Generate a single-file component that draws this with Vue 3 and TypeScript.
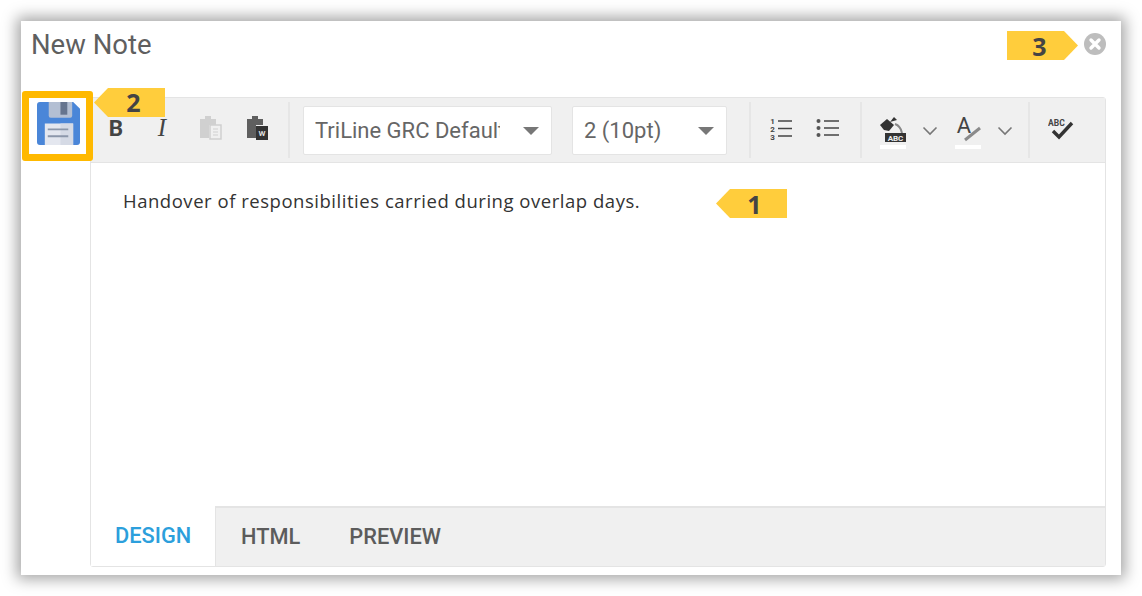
<script setup lang="ts">
import { ref } from 'vue'

const tabs = ['Design', 'HTML', 'Preview']
const activeTab = ref('Design')
</script>

<template>
  <div class="page">
    <div class="panel">
      <header class="head">
        <h1 class="title">New Note</h1>
        <svg class="close" width="24" height="24" viewBox="0 0 24 24">
          <circle cx="12" cy="12" r="11" fill="#bdbdbd" />
          <path d="M8 8l8 8M16 8l-8 8" stroke="#fff" stroke-width="3.4" stroke-linecap="round" />
        </svg>
      </header>

      <div class="body">
        <div class="rail">
          <svg width="43" height="43" viewBox="0 0 44 44">
            <path d="M3 0h34l7 7v34a3 3 0 0 1-3 3H3a3 3 0 0 1-3-3V3a3 3 0 0 1 3-3z" fill="#4a86d8" />
            <path d="M12 0h24v14a2 2 0 0 1-2 2H14a2 2 0 0 1-2-2z" fill="#b3bfd3" />
            <rect x="24" y="0" width="7" height="13" fill="#66758f" />
            <rect x="8" y="22" width="29" height="22" fill="#e4e7ef" />
            <rect x="24" y="22" width="13" height="22" fill="#d5dae5" />
            <path d="M11 28h21M11 35h21" stroke="#8c97aa" stroke-width="2" />
          </svg>
        </div>

        <div class="editor">
          <div class="toolbar">
            <div class="group first">
              <span class="btn bold">B</span>
              <span class="btn italic">I</span>
              <span class="btn paste">
                <svg width="24" height="24" viewBox="0 0 24 24">
                  <path d="M1 3h5V0h6v3h5v6h-7v13H1z" fill="#d0d0d0" />
                  <path d="M11 9h11v14H11z" fill="#f0f0f0" stroke="#cfcfcf" stroke-width="1.5" />
                  <path d="M14 13h5M14 16h5M14 19h5" stroke="#cfcfcf" stroke-width="1.2" />
                </svg>
              </span>
              <span class="btn paste-word">
                <svg width="24" height="24" viewBox="0 0 24 24">
                  <path d="M1 3h5V0h6v3h5v6h-7v13H1z" fill="#5f5f5f" />
                  <path d="M10 10h12v14H10z" fill="#333" />
                  <text x="16" y="20" class="mini" text-anchor="middle">W</text>
                </svg>
              </span>
            </div>

            <div class="group selects">
              <div class="select font">
                <span class="value">TriLine GRC Default</span>
                <i class="caret" />
              </div>
              <div class="select size">
                <span class="value">2 (10pt)</span>
                <i class="caret" />
              </div>
            </div>

            <div class="group lists">
              <span class="btn">
                <svg width="26" height="24" viewBox="0 0 26 24">
                  <path d="M9 4h14M9 11.500h14M9 19h14" stroke="#444" stroke-width="1.500" />
                  <text x="3.500" y="7" class="num" text-anchor="middle">1</text>
                  <text x="3.500" y="15" class="num" text-anchor="middle">2</text>
                  <text x="3.500" y="23" class="num" text-anchor="middle">3</text>
                </svg>
              </span>
              <span class="btn">
                <svg width="26" height="24" viewBox="0 0 26 24">
                  <path d="M9 4h15M9 11h15M9 18h15" stroke="#444" stroke-width="1.500" />
                  <circle cx="3.500" cy="4" r="2" fill="#555" />
                  <circle cx="3.500" cy="11" r="2" fill="#555" />
                  <circle cx="3.500" cy="18" r="2" fill="#555" />
                </svg>
              </span>
            </div>

            <div class="group colors">
              <svg class="color" width="26" height="32" viewBox="0 0 26 32">
                <path d="M0 8l7-6 7 6-5 6-5-1z" fill="#333" />
                <path d="M10 5l4-5 3 3z" fill="#333" />
                <path d="M15 7c3 1 6 4 7 9" stroke="#888" stroke-width="2" fill="none" />
                <rect x="5" y="16" width="21" height="9" fill="#333" />
                <text x="15.500" y="24" class="abc" text-anchor="middle">ABC</text>
                <rect x="0" y="28" width="26" height="4" fill="#fff" />
              </svg>
              <svg class="chev" width="16" height="10" viewBox="0 0 16 10"><path d="M1.500 1.500L8 8l6.500-6.500" stroke="#777" stroke-width="1.600" fill="none" /></svg>
              <svg class="color" width="26" height="32" viewBox="0 0 26 32">
                <text x="9" y="16" class="big-a" text-anchor="middle">A</text>
                <path d="M10 23L25 11" stroke="#8a8a8a" stroke-width="3" />
                <rect x="0" y="28" width="26" height="4" fill="#fff" />
              </svg>
              <svg class="chev" width="16" height="10" viewBox="0 0 16 10"><path d="M1.500 1.500L8 8l6.500-6.500" stroke="#777" stroke-width="1.600" fill="none" /></svg>
            </div>

            <div class="group spell">
              <svg width="26" height="24" viewBox="0 0 26 24">
                <text x="0" y="9" class="tiny">ABC</text>
                <path d="M5 14l6 6L24 6" stroke="#333" stroke-width="3.400" fill="none" />
              </svg>
            </div>
          </div>

          <div class="content">Handover of responsibilities carried during overlap days.</div>

          <div class="tabs">
            <span
              v-for="tab in tabs"
              :key="tab"
              class="tab"
              :class="{ active: tab === activeTab }"
            >{{ tab }}</span>
          </div>
        </div>
      </div>

      <div class="save-mark" />
      <div class="tag tag-1 point-left">1</div>
      <div class="tag tag-2 point-left">2</div>
      <div class="tag tag-3 point-right">3</div>
    </div>
  </div>
</template>

<style scoped>
.page {
  box-sizing: border-box;
  width: 1142px;
  height: 596px;
  padding: 21px;
  background: #fff;
  overflow: hidden;
}
.panel {
  position: relative;
  box-sizing: border-box;
  width: 1100px;
  height: 554px;
  padding: 0 15px 8px 0;
  display: flex;
  flex-direction: column;
  background: #fff;
  box-shadow: 0 0 14px 4px rgba(0, 0, 0, 0.36);
  font-family: Roboto, sans-serif;
}
.head {
  flex: none;
  height: 76px;
  display: flex;
  align-items: flex-start;
  justify-content: space-between;
  padding-left: 10px;
}
.title {
  margin: 7px 0 0;
  font-size: 27.5px;
  line-height: 34px;
  font-weight: 400;
  color: #5f5f5f;
}
.close {
  margin: 11px -1px 0 0;
}
.body {
  flex: 1;
  display: flex;
  min-height: 0;
}
.rail {
  flex: none;
  width: 69px;
  padding: 5px 0 0 16px;
  box-sizing: border-box;
}
.editor {
  flex: 1;
  display: flex;
  flex-direction: column;
  border: 1px solid #e4e4e4;
  border-radius: 3px;
}
.toolbar {
  flex: none;
  height: 64px;
  display: flex;
  align-items: center;
  background: #f0f0f0;
  border-bottom: 1px solid #e4e4e4;
}
.group {
  box-sizing: border-box;
  height: 56px;
  display: flex;
  align-items: center;
  border-right: 2px solid #e6e6e6;
}
.btn {
  width: 46px;
  display: flex;
  align-items: center;
  justify-content: center;
  color: #444;
}
.bold {
  font-size: 22.5px;
  font-weight: 700;
}
.italic {
  font-family: "Liberation Serif", serif;
  font-size: 25px;
  font-style: italic;
}
.paste {
  margin-left: 3px;
}
.paste-word {
  margin-left: 1px;
}
.first {
  padding: 0 7px 4px 2px;
}
.selects {
  padding: 0 22px 0 13px;
  gap: 20px;
}
.select {
  box-sizing: border-box;
  height: 49px;
  display: flex;
  align-items: center;
  padding: 1px 12px 0 11px;
  background: #fff;
  border: 1px solid #e4e4e4;
  border-radius: 2px;
  font-size: 22px;
  color: #666;
}
.font {
  width: 249px;
}
.size {
  width: 155px;
}
.value {
  flex: 1;
  overflow: hidden;
  white-space: nowrap;
}
.font .value {
  max-width: 185px;
}
.caret {
  margin-left: auto;
  border-left: 8px solid transparent;
  border-right: 8px solid transparent;
  border-top: 8px solid #777;
}
.lists {
  padding: 0 9px 2px 8px;
}
.colors {
  width: 168px;
  padding-left: 18px;
}
.color {
  margin-top: 6px;
  overflow: visible;
}
.chev {
  flex: none;
  margin: 2px 17px 0 16px;
}
.spell {
  border: none;
  padding: 0 0 2px 18px;
}
.num {
  font: 700 8px Roboto, sans-serif;
  fill: #444;
}
.mini {
  font: 700 8px Roboto, sans-serif;
  fill: #ddd;
}
.abc {
  font: 700 8px Roboto, sans-serif;
  fill: #eee;
}
.tiny {
  font: 700 8.500px Roboto, sans-serif;
  fill: #444;
}
.big-a {
  font: 400 22px Roboto, sans-serif;
  fill: #444;
}
.content {
  flex: 1;
  padding: 26px 32px;
  font-family: "Open Sans", sans-serif;
  font-size: 18.5px;
  letter-spacing: 0.53px;
  line-height: 24px;
  color: #333;
}
.tabs {
  flex: none;
  height: 60px;
  display: flex;
  background: #f0f0f0;
  border-top: 2px solid #e4e4e4;
  box-sizing: border-box;
}
.tab {
  display: flex;
  align-items: center;
  padding: 0 24.5px 2px;
  font-size: 21.8px;
  font-weight: 500;
  text-transform: uppercase;
  color: #5c5c5c;
}
.tab.active {
  margin: -2px 0.500px 0 0;
  width: 125px;
  box-sizing: border-box;
  padding: 0 0 2px 24px;
  background: #fff;
  border-right: 1px solid #e4e4e4;
  color: #2c9fdc;
}
.save-mark {
  position: absolute;
  left: 1px;
  top: 70px;
  width: 71px;
  height: 70px;
  box-sizing: border-box;
  border: 7px solid #ffb900;
  border-radius: 3px;
}
.tag {
  position: absolute;
  width: 71px;
  height: 29px;
  background: #ffcd3c;
  font-family: "Open Sans", sans-serif;
  font-size: 25px;
  font-weight: 700;
  line-height: 30px;
  text-align: center;
  color: #444;
}
.point-left {
  clip-path: polygon(14px 0, 100% 0, 100% 100%, 14px 100%, 0 50%);
  text-indent: 6px;
}
.point-right {
  clip-path: polygon(0 0, 57px 0, 100% 50%, 57px 100%, 0 100%);
  text-indent: -6px;
}
.tag-1 {
  left: 695px;
  top: 168px;
}
.tag-2 {
  left: 73px;
  top: 67px;
  line-height: 28px;
  text-indent: 8px;
}
.tag-3 {
  left: 986px;
  top: 10px;
}
</style>
